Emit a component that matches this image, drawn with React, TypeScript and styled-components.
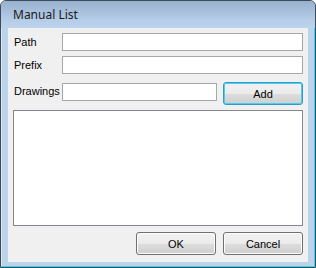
import styled, { createGlobalStyle } from "styled-components";

const GlobalStyle = createGlobalStyle`
  html, body {
    margin: 0;
    padding: 0;
    background: #ffffff;
  }
  body {
    font-family: "Liberation Sans", Arial, sans-serif;
  }
`;

const Window = styled.div`
  box-sizing: border-box;
  width: 316px;
  height: 268px;
  display: flex;
  flex-direction: column;
  border: 1px solid #3c4a5a;
  border-radius: 6px 6px 0 0;
  background: #bcd3ec;
  box-shadow: inset -1px -1px 0 #35d6f0, inset 1px 1px 0 #d9e6f4;
  overflow: hidden;
`;

const TitleBar = styled.div`
  height: 27px;
  flex: none;
  display: flex;
  align-items: center;
  padding-left: 12px;
  padding-bottom: 1px;
  box-sizing: border-box;
  background: linear-gradient(#97b0cd, #b5cde7 70%, #bcd3ec);
  font-family: "Noto Sans", "Liberation Sans", sans-serif;
  font-size: 12px;
  color: #1a1a1a;
`;

const Client = styled.div`
  flex: 1;
  margin: 0 7px 7px 7px;
  background: #f0f0f0;
  display: flex;
  flex-direction: column;
  padding: 5px 5px 7px 5px;
  box-sizing: border-box;
  font-size: 11px;
  color: #000;
`;

const Row = styled.div<{ $gap?: number }>`
  display: flex;
  align-items: flex-start;
  margin-bottom: ${(p) => p.$gap ?? 5}px;
`;

const Label = styled.div`
  width: 49px;
  flex: none;
  line-height: 18px;
  padding-left: 1px;
  box-sizing: border-box;
`;

const TextBox = styled.div<{ $top?: number; $right?: number }>`
  flex: 1;
  height: 18px;
  margin-top: ${(p) => p.$top ?? 0}px;
  margin-right: ${(p) => p.$right ?? 0}px;
  background: #fff;
  border: 1px solid #a5a7ad;
  box-sizing: border-box;
`;

const ListBox = styled.div`
  height: 116px;
  background: #fff;
  border: 1px solid #828790;
  box-sizing: border-box;
  margin-bottom: 6px;
`;

const Button = styled.div<{ $default?: boolean }>`
  box-sizing: border-box;
  width: 80px;
  height: 23px;
  flex: none;
  display: flex;
  align-items: center;
  justify-content: center;
  border-radius: 3px;
  border: 1px solid ${(p) => (p.$default ? "#3399cc" : "#707070")};
  background: linear-gradient(#f2f2f2, #ebebeb 50%, #dddddd 51%, #cfcfcf);
  box-shadow: ${(p) =>
    p.$default ? "inset 0 0 0 1px #48d0f4" : "inset 0 0 0 1px #fcfcfc"};
  font-size: 11px;
  color: #000;
`;

const Footer = styled.div`
  display: flex;
  justify-content: flex-end;
  gap: 7px;
`;

export default function App() {
  return (
    <>
      <GlobalStyle />
      <Window>
        <TitleBar>Manual List</TitleBar>
        <Client>
          <Row>
            <Label>Path</Label>
            <TextBox />
          </Row>
          <Row $gap={8}>
            <Label>Prefix</Label>
            <TextBox />
          </Row>
          <Row>
            <Label>Drawings</Label>
            <TextBox $top={1} $right={6} />
            <Button $default>Add</Button>
          </Row>
          <ListBox />
          <Footer>
            <Button>OK</Button>
            <Button>Cancel</Button>
          </Footer>
        </Client>
      </Window>
    </>
  );
}
